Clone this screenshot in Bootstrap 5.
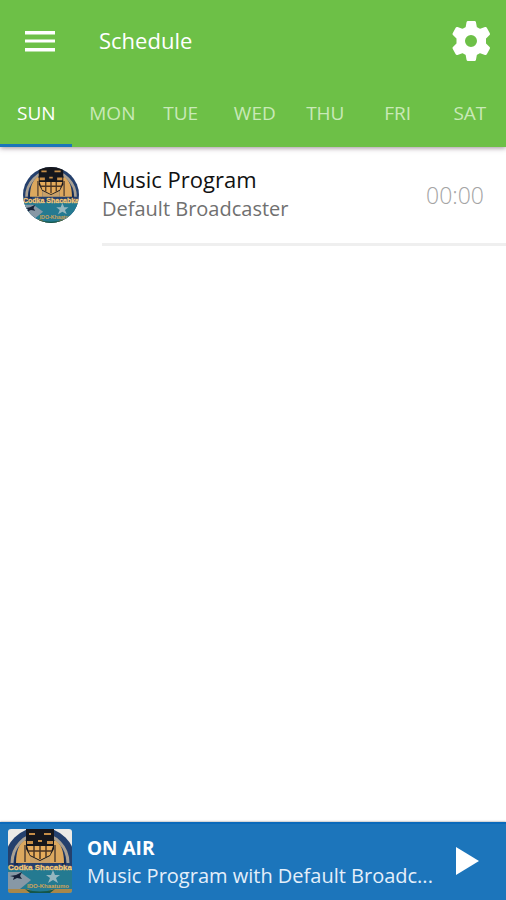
<!DOCTYPE html>
<html lang="en">
<head>
<meta charset="utf-8">
<meta name="viewport" content="width=device-width, initial-scale=1">
<title>Schedule</title>
<link href="https://cdn.jsdelivr.net/npm/bootstrap@5.3.0/dist/css/bootstrap.min.css" rel="stylesheet">
<style>
  body { font-family: "Open Sans", "Noto Sans", sans-serif; background: #fff; }
  .app-head { background: #6dc047; box-shadow: 0 1px 5px rgba(60, 30, 50, .5); }
  .app-bar { height: 82px; padding: 0 14px 0 24px; }
  .app-title { font-size: 22px; line-height: 30px; margin-left: 43px; padding-bottom: 2px; }
  .icon-btn { line-height: 0; }
  .day-tab { height: 65px; min-width: 0; padding: 0 17px; border-bottom: 3px solid transparent; border-radius: 0;
    color: #c9e9b8; font-size: 19px; line-height: 28px; white-space: nowrap; }
  .day-tab.active { color: #fff; border-bottom-color: #1a75bb; }
  .show-row { padding-left: 23px; }
  .show-logo { width: 56px; height: 56px; margin-top: 20px; }
  .show-body { margin-left: 23px; padding: 16px 22px 16px 0; border-bottom: 3px solid #efefef; }
  .show-name { font-size: 22px; line-height: 32px; color: #111; }
  .show-host { font-size: 20px; line-height: 28px; color: #707070; }
  .show-time { font-size: 23px; line-height: 32px; font-weight: 300; color: #a4a4a4; }
  .player { background: #1c75bb; border-top: 2px solid #0b6abb; padding: 5px 26px 7px 8px; box-shadow: 0 0 2px rgba(0, 0, 0, .5); }
  .player-logo { width: 64px; height: 64px; border-radius: 3px; }
  .player-text { margin: 0 12px 0 15px; }
  .player-state { font-size: 19px; line-height: 28px; font-weight: 700; }
  .player-show { font-size: 20px; line-height: 27px; color: #e4effa; }
</style>
<script src="https://cdn.jsdelivr.net/npm/bootstrap@5.3.0/dist/js/bootstrap.bundle.min.js"></script>
</head>
<body class="d-flex flex-column min-vh-100">
<svg class="d-none" aria-hidden="true">
  <symbol id="station" viewBox="0 0 64 64">
    <rect width="64" height="64" fill="#eceae6"/>
    <circle cx="32" cy="34" r="36" fill="#24406d"/>
    <path d="M4 34A28 29 0 0 1 60 34" fill="none" stroke="#a9a093" stroke-width="3"/>
    <path d="M8 36A24 26 0 0 1 56 36" fill="none" stroke="#172b52" stroke-width="4"/>
    <path d="M8 34C8 22 11 15 17 11L22 17V34ZM56 34C56 22 53 15 47 11L42 17V34Z" fill="#dca85e"/>
    <path d="M22 24V34H42V24Z" fill="#c8a069"/>
    <path d="M17 16V33M47 16V33" stroke="#775b3c" stroke-width="2"/>
    <path d="M18 0H46V20L42 27L32 32L22 27L18 20Z" fill="#15161c"/>
    <path d="M21 4H27V6H21ZM36 4H43V6H36ZM19 12H25V15H19ZM30 11H34V13H30ZM39 12H45V15H39Z" fill="#c68e48"/>
    <path d="M19 17H45L42 26L32 31L22 26Z" fill="#e5ab5c"/>
    <path d="M26 17V28M32 17V30M38 17V28M20 22H44" stroke="#4a3524" stroke-width="1.500"/>
    <rect y="40" width="64" height="24" fill="#247a91"/>
    <path d="M0 43H12L23 51L12 60H0Z" fill="#8798a5"/>
    <path d="M2 47L8 46L14 43L12 47L14 50L9 49L5 51L6 48Z" fill="#172137"/>
    <path d="M45 41L47 46H52L48 49L50 54L45 51L40 54L42 49L38 46H43Z" fill="#95b6bf"/>
    <path d="M0 60H20Q32 68 44 60H64V64H0Z" fill="#a8874a"/>
    <path d="M17 60Q32 65 47 60L42 64H22Z" fill="#145648"/>
    <text x="32" y="41" text-anchor="middle" font-family="Liberation Sans, sans-serif" font-weight="700" font-size="8" fill="#f5c978" stroke="#f5c978" stroke-width=".3">Codka Shacabka</text>
    <text x="61" y="59" text-anchor="end" font-family="Liberation Sans, sans-serif" font-weight="700" font-size="6" fill="#cfa45a">IDO-Khaatumo</text>
  </symbol>
</svg>

<header class="app-head position-relative">
  <div class="app-bar d-flex align-items-center text-white">
    <button class="icon-btn btn p-0 border-0 text-white" type="button" aria-label="Menu">
      <svg width="32" height="24" viewBox="0 0 32 24" fill="currentColor"><path d="M1 2H31V5.500H1ZM1 10.500H31V13.500H1ZM1 19H31V22.500H1Z"/></svg>
    </button>
    <h1 class="app-title fw-normal mb-0 flex-grow-1">Schedule</h1>
    <button class="icon-btn btn p-0 border-0 text-white" type="button" aria-label="Settings">
      <svg width="42" height="42" viewBox="0 0 42 42"><path fill="currentColor" stroke="currentColor" stroke-width="3" stroke-linejoin="round" fill-rule="evenodd" d="M18 2.500H24.500L25.500 8L30 10.500L35.500 8.500L38.500 14L34.500 18V24L38.500 28L35.500 33.500L30 31.500L25.500 34L24.500 39.500H18L17 34L12.500 31.500L7 33.500L4 28L8 24V18L4 14L7 8.500L12.500 10.500L17 8ZM21 13.500A7.500 7.500 0 1 0 21 28.500A7.500 7.500 0 1 0 21 13.500Z"/></svg>
    </button>
  </div>
  <nav class="d-flex" role="tablist" aria-label="Days">
    <button class="day-tab btn border-top-0 border-start-0 border-end-0 w-100 active" type="button" role="tab" aria-selected="true">SUN</button>
    <button class="day-tab btn border-top-0 border-start-0 border-end-0 w-100" type="button" role="tab">MON</button>
    <button class="day-tab btn border-top-0 border-start-0 border-end-0 w-100" type="button" role="tab">TUE</button>
    <button class="day-tab btn border-top-0 border-start-0 border-end-0 w-100" type="button" role="tab">WED</button>
    <button class="day-tab btn border-top-0 border-start-0 border-end-0 w-100" type="button" role="tab">THU</button>
    <button class="day-tab btn border-top-0 border-start-0 border-end-0 w-100" type="button" role="tab">FRI</button>
    <button class="day-tab btn border-top-0 border-start-0 border-end-0 w-100" type="button" role="tab">SAT</button>
  </nav>
</header>

<main class="flex-grow-1">
  <ul class="list-unstyled mb-0">
    <li class="show-row d-flex align-items-start">
      <svg class="show-logo rounded-circle flex-shrink-0" role="img" aria-label="Station logo"><use href="#station"/></svg>
      <div class="show-body d-flex align-items-start flex-grow-1">
        <div class="flex-grow-1">
          <div class="show-name">Music Program</div>
          <div class="show-host">Default Broadcaster</div>
        </div>
        <time class="show-time my-3">00:00</time>
      </div>
    </li>
  </ul>
</main>

<footer class="player d-flex align-items-center text-white sticky-bottom">
  <svg class="player-logo flex-shrink-0" role="img" aria-label="Station logo"><use href="#station"/></svg>
  <div class="player-text flex-grow-1 overflow-hidden">
    <div class="player-state">ON AIR</div>
    <div class="player-show text-truncate">Music Program with Default Broadc...</div>
  </div>
  <button class="icon-btn btn p-0 border-0 text-white" type="button" aria-label="Play">
    <svg width="26" height="30" viewBox="0 0 26 30" fill="currentColor"><path d="M2 1L25 15L2 29Z"/></svg>
  </button>
</footer>
</body>
</html>
